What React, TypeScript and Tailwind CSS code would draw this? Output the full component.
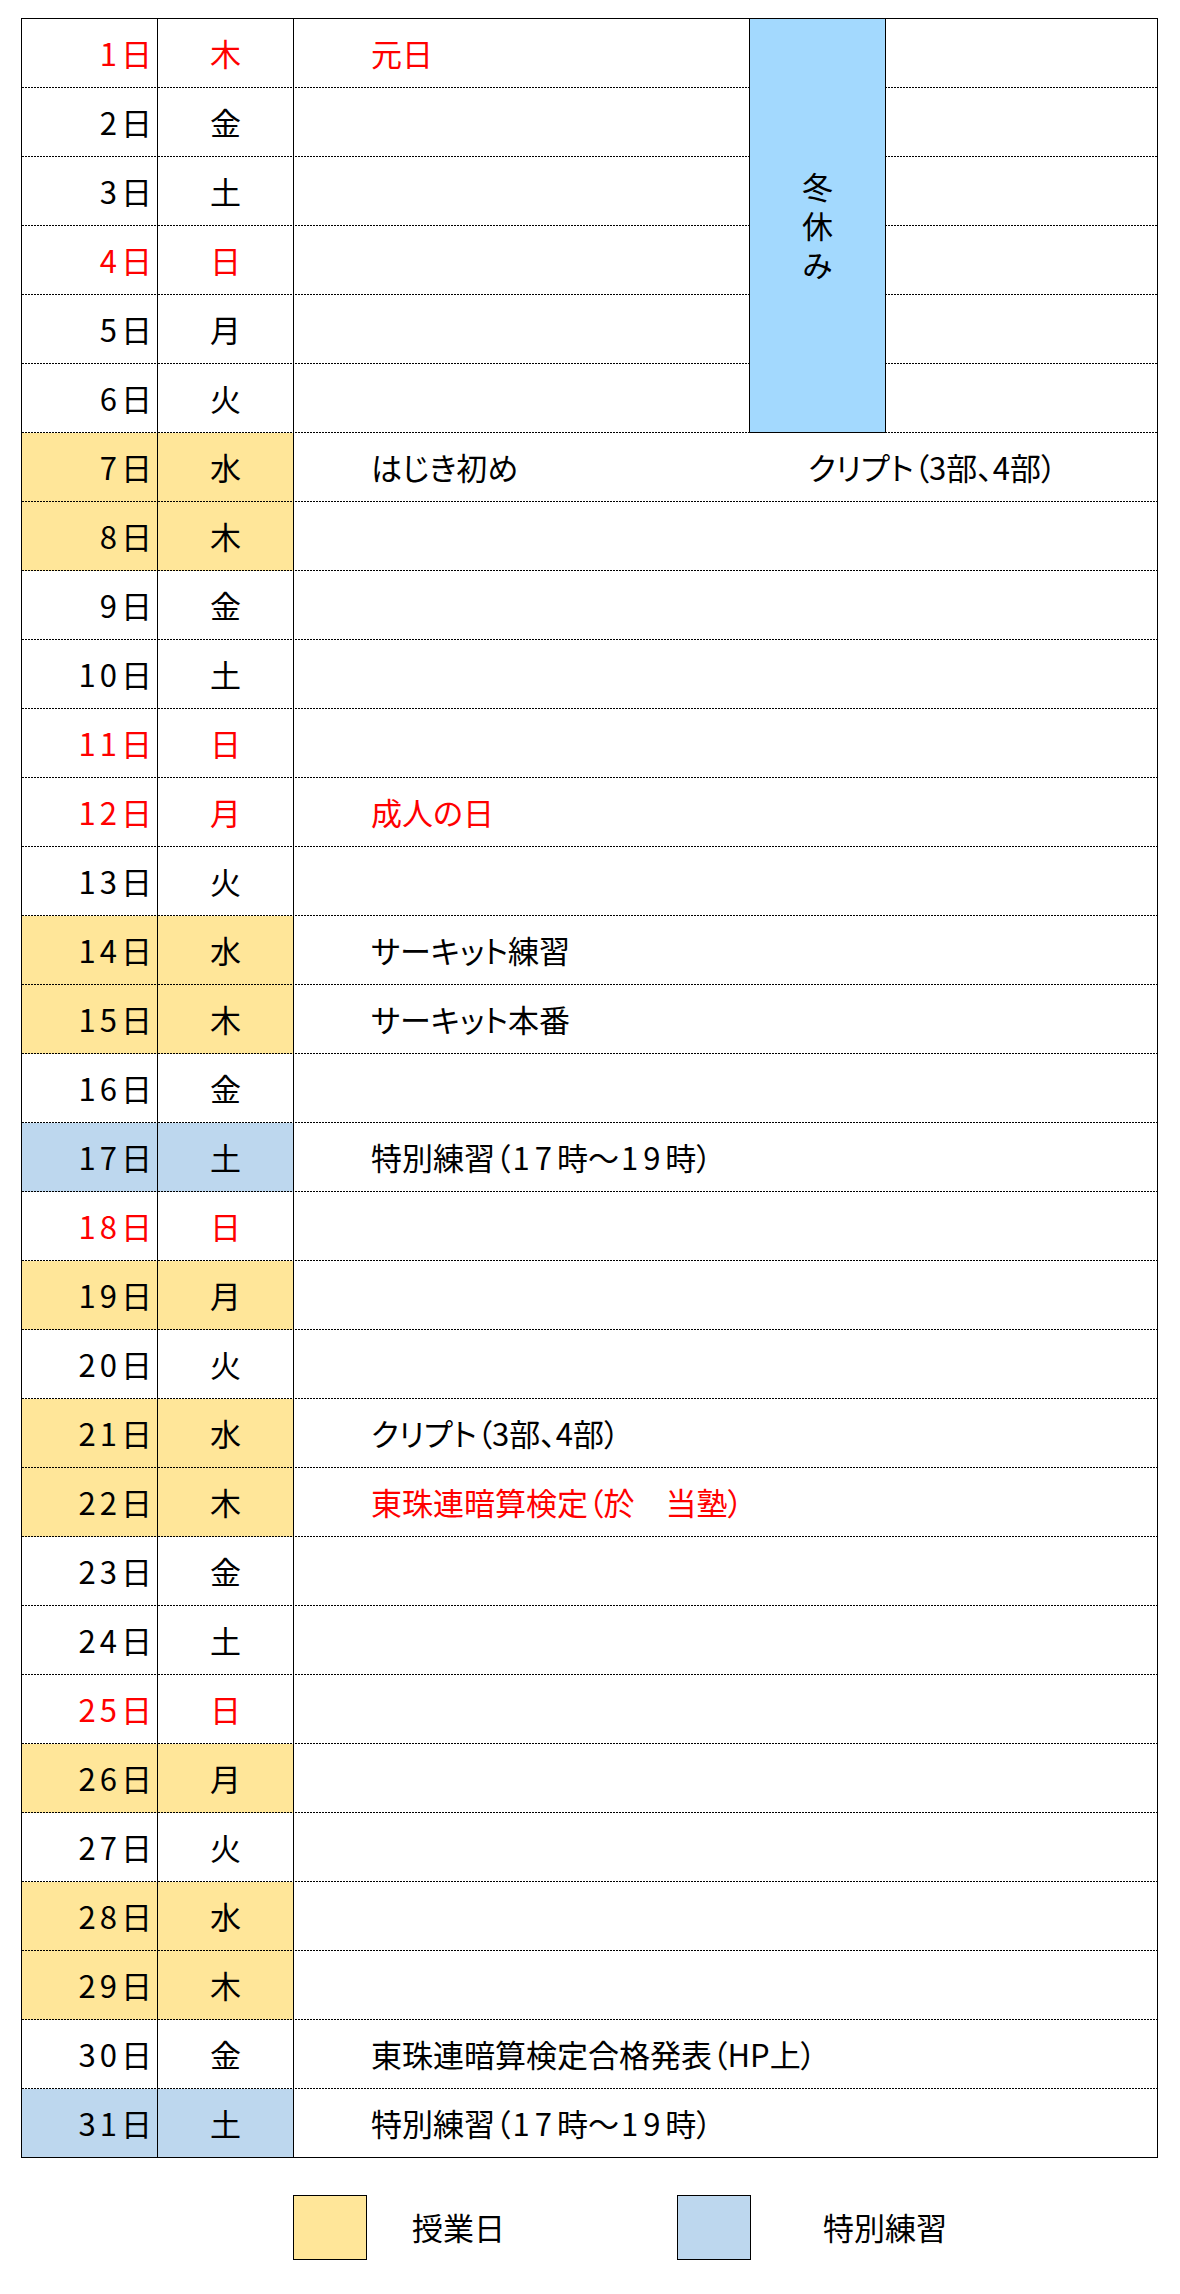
import type { ReactNode } from "react";

type Day = {
  d: number;
  w: string;
  red?: boolean;
  bg?: "y" | "b";
  ev?: ReactNode;
  evRed?: boolean;
  ev2?: string;
};

// the time range uses wider-set digits in the sheet
const Practice = () => (
  <>
    特別練習（<span className="ml-[2px] tracking-[5px]">17</span>時～<span className="ml-[2px] tracking-[5px]">19</span>時）
  </>
);

const days: Day[] = [
  { d: 1, w: "木", red: true, ev: "元日", evRed: true },
  { d: 2, w: "金" },
  { d: 3, w: "土" },
  { d: 4, w: "日", red: true },
  { d: 5, w: "月" },
  { d: 6, w: "火" },
  { d: 7, w: "水", bg: "y", ev: "はじき初め", ev2: "クリプト（3部、4部）" },
  { d: 8, w: "木", bg: "y" },
  { d: 9, w: "金" },
  { d: 10, w: "土" },
  { d: 11, w: "日", red: true },
  { d: 12, w: "月", red: true, ev: "成人の日", evRed: true },
  { d: 13, w: "火" },
  { d: 14, w: "水", bg: "y", ev: "サーキット練習" },
  { d: 15, w: "木", bg: "y", ev: "サーキット本番" },
  { d: 16, w: "金" },
  { d: 17, w: "土", bg: "b", ev: <Practice /> },
  { d: 18, w: "日", red: true },
  { d: 19, w: "月", bg: "y" },
  { d: 20, w: "火" },
  { d: 21, w: "水", bg: "y", ev: "クリプト（3部、4部）" },
  { d: 22, w: "木", bg: "y", ev: "東珠連暗算検定（於　当塾）", evRed: true },
  { d: 23, w: "金" },
  { d: 24, w: "土" },
  { d: 25, w: "日", red: true },
  { d: 26, w: "月", bg: "y" },
  { d: 27, w: "火" },
  { d: 28, w: "水", bg: "y" },
  { d: 29, w: "木", bg: "y" },
  { d: 30, w: "金", ev: "東珠連暗算検定合格発表（HP上）" },
  { d: 31, w: "土", bg: "b", ev: <Practice /> },
];

// dashed row separator, drawn as a repeating 1px strip at the bottom of each cell
const dash =
  "bg-[linear-gradient(to_right,#000_2px,transparent_2px)] bg-[length:3px_1px] bg-repeat-x bg-bottom";

function Row({ r, last }: { r: Day; last: boolean }) {
  const line = last ? "" : dash;
  const fill = r.bg === "y" ? "bg-[#FFE699]" : r.bg === "b" ? "bg-[#BDD7EE]" : "";
  const tone = r.red ? "text-[#FF0000]" : "text-black";
  const early = r.d <= 6;

  return (
    <>
      <div className={`flex items-center justify-end border-r border-black pr-[1px] tracking-[4px] ${fill} ${line} ${tone}`}>
        {r.d}日
      </div>
      <div className={`flex items-center justify-center border-r border-black ${fill} ${line} ${tone}`}>
        {r.w}
      </div>
      <div
        className={`flex items-center pl-[77px] [font-feature-settings:'palt'] ${line} ${
          r.evRed ? "text-[#FF0000]" : "text-black"
        } ${early ? "" : "col-span-3"}`}
      >
        {r.ev2 ? (
          <>
            <span className="w-[437px] shrink-0">{r.ev}</span>
            <span>{r.ev2}</span>
          </>
        ) : (
          r.ev && <span>{r.ev}</span>
        )}
      </div>
      {early && <div className={line} />}
    </>
  );
}

export default function App() {
  return (
    <div className="min-h-[2294px] bg-white pt-[18px] font-['Noto_Sans_CJK_JP',sans-serif] text-[31px] text-black">
      <div className="ml-[21px] grid w-[1137px] grid-cols-[136px_136px_455px_137px_271px] grid-rows-[repeat(30,69px)_68px] border border-black">
        {/* winter break block over rows 1-6 */}
        <div className="col-start-4 row-span-6 row-start-1 flex items-center justify-center border-x border-b border-black bg-[#A3D9FE] pt-[10px]">
          <span className="leading-none tracking-[8px] [writing-mode:vertical-rl]">冬休み</span>
        </div>
        {days.map((r, i) => (
          <Row key={r.d} r={r} last={i === days.length - 1} />
        ))}
      </div>

      {/* legend */}
      <div className="ml-[293px] mt-[37px] flex items-center">
        <div className="h-[65px] w-[74px] border border-black bg-[#FFE699]" />
        <span className="ml-[45px]">授業日</span>
        <div className="ml-[172px] h-[65px] w-[74px] border border-black bg-[#BDD7EE]" />
        <span className="ml-[72px]">特別練習</span>
      </div>
    </div>
  );
}
